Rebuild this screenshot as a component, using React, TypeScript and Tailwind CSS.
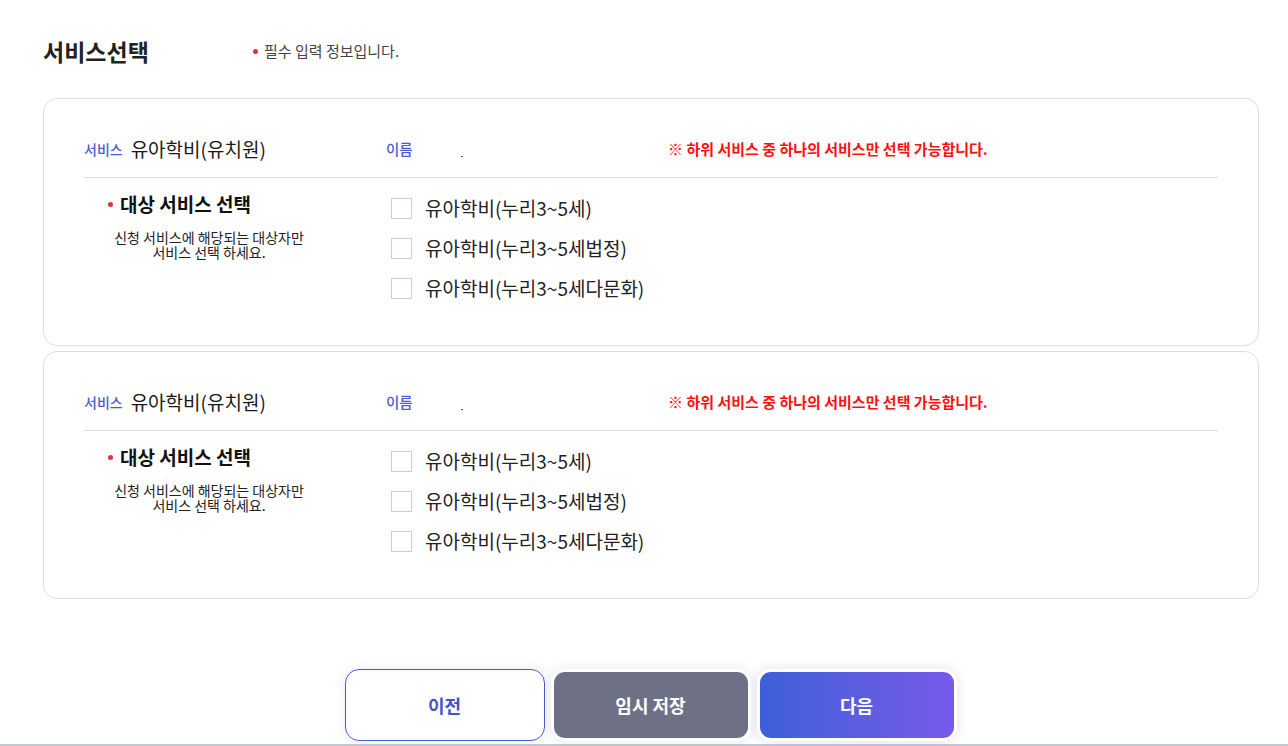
const font = { fontFamily: '"Noto Sans CJK KR", "Noto Sans", sans-serif' };

const options = ['유아학비(누리3~5세)', '유아학비(누리3~5세법정)', '유아학비(누리3~5세다문화)'];

function ServiceCard() {
    return (
        <div className="rounded-[14px] border border-[#dcdde2] bg-white px-10 pt-[36px] pb-[37px]">
            <div className="flex items-center h-[28px] mb-[14px]">
                <div className="w-[302px] flex items-center gap-[8px]">
                    <span className="text-[14px] font-medium text-[#4a5bd6]">서비스</span>
                    <span className="text-[19px] text-[#1a1a1a]">유아학비(유치원)</span>
                </div>
                <div className="w-[282px] flex items-center">
                    <span className="text-[14.5px] font-medium text-[#4a5bd6]">이름</span>
                    <span className="ml-[48px] mt-[14px] w-[2px] h-[1px] bg-[#555]" />
                </div>
                <span className="text-[15px] font-bold text-[#ff1111]">※ 하위 서비스 중 하나의 서비스만 선택 가능합니다.</span>
            </div>
            <div className="border-t border-[#dcdde2] pt-[10px] flex">
                <div className="w-[307px] pt-[2px]">
                    <div className="flex items-center pl-[24px] h-[28px]">
                        <span className="w-[5px] h-[5px] rounded-full bg-[#e0343b] mr-[7px]" />
                        <span className="text-[19px] font-bold text-[#111]">대상 서비스 선택</span>
                    </div>
                    <p className="w-[250px] mt-[12px] text-center text-[14px] leading-[15px] text-[#222]">
                        신청 서비스에 해당되는 대상자만
                        <br />
                        서비스 선택 하세요.
                    </p>
                </div>
                <div className="flex flex-col">
                    {options.map((o) => (
                        <label key={o} className="flex items-center h-[40px] gap-[13px]">
                            <span className="w-[21px] h-[21px] border border-[#c9cde0] bg-white" />
                            <span className="text-[19px] text-[#222]">{o}</span>
                        </label>
                    ))}
                </div>
            </div>
        </div>
    );
}

export default function App() {
    return (
        <div className="w-[1288px] h-[746px] bg-white overflow-hidden" style={font}>
            <div className="pl-[43px] pr-[29px] pt-[36px]">
                <div className="flex items-center h-[30px] mb-[32px]">
                    <h2 className="w-[210px] text-[23px] font-bold text-[#222]">서비스선택</h2>
                    <span className="w-[5px] h-[5px] rounded-full bg-[#e0343b] mr-[6px]" />
                    <span className="text-[15px] text-[#444]">필수 입력 정보입니다.</span>
                </div>
                <div className="flex flex-col gap-[5px]">
                    <ServiceCard />
                    <ServiceCard />
                </div>
            </div>
            <div className="mt-[70px] flex justify-center gap-[6px] pl-[13px]">
                <button className="w-[200px] h-[72px] rounded-[14px] border border-[#4a5bd6] bg-white text-[18px] font-bold text-[#3f55d0] shadow-[0_0_12px_rgba(90,90,160,0.12)]">
                    이전
                </button>
                <button className="w-[200px] h-[72px] rounded-[14px] border-[3px] border-white bg-[#6e7186] text-[18px] font-bold text-white shadow-[0_0_12px_rgba(90,90,160,0.15)]">
                    임시 저장
                </button>
                <button className="w-[200px] h-[72px] rounded-[14px] border-[3px] border-white bg-linear-to-r from-[#3c5fd8] to-[#755be9] text-[18px] font-bold text-white shadow-[0_0_12px_rgba(90,90,160,0.2)]">
                    다음
                </button>
            </div>
            <div className="mt-[3px] border-t-2 border-[#c4c8d2]" />
        </div>
    );
}
